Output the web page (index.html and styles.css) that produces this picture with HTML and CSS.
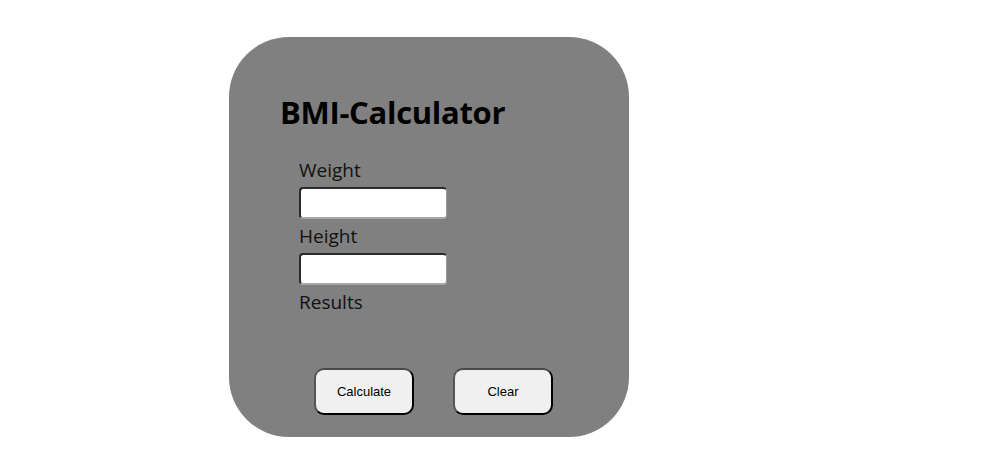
FILE: index.html
```html
<!DOCTYPE html>
<html>
<head>
<meta charset="utf-8">
<link rel="stylesheet" href="styles.css">
</head>
<body>
<div class="page">
  <div class="card">
    <h1 class="title">BMI-Calculator</h1>
    <div class="form">
      <label class="label" for="w">Weight</label>
      <input class="field" id="w" type="text">
      <label class="label" for="h">Height</label>
      <input class="field" id="h" type="text">
      <div class="label">Results</div>
    </div>
    <div class="actions">
      <button class="btn">Calculate</button>
      <button class="btn">Clear</button>
    </div>
  </div>
</div>
</body>
</html>
```

FILE: styles.css
```css
html, body {
  margin: 0;
  padding: 0;
  background: #ffffff;
}
.page {
  padding: 37px 0 0 229px;
}
.card {
  box-sizing: border-box;
  width: 400px;
  height: 400px;
  background: #808080;
  border-radius: 60px;
  padding: 55px 0 0 51px;
  display: flex;
  flex-direction: column;
  font-family: "Open Sans", "Noto Sans", sans-serif;
  color: #000;
}
.title {
  margin: 0;
  font-size: 31px;
  line-height: 40px;
  font-weight: 700;
  letter-spacing: -0.3px;
}
.form {
  display: flex;
  flex-direction: column;
  align-items: flex-start;
  margin: 22px 0 0 19px;
}
.label {
  font-size: 19px;
  line-height: 27px;
  padding-top: 3px;
  color: #111;
}
.field {
  box-sizing: border-box;
  width: 148px;
  height: 32px;
  margin: 3px 0 1px 0;
  background: #fff;
  border-style: solid;
  border-width: 2px 1px 2px 2px;
  border-color: #2a2a2a #9a9a9a #a8a8a8 #2a2a2a;
  border-radius: 4px;
  padding: 0;
}
.actions {
  display: flex;
  gap: 39px;
  margin: 52px 0 0 34px;
}
.btn {
  box-sizing: border-box;
  width: 100px;
  height: 47px;
  background: #f0f0f0;
  border-style: solid;
  border-width: 2px;
  border-color: #4a4a4a #000 #000 #555;
  border-radius: 10px;
  font-family: "Liberation Sans", Arial, sans-serif;
  font-size: 13px;
  color: #000;
  padding: 0;
}
```
